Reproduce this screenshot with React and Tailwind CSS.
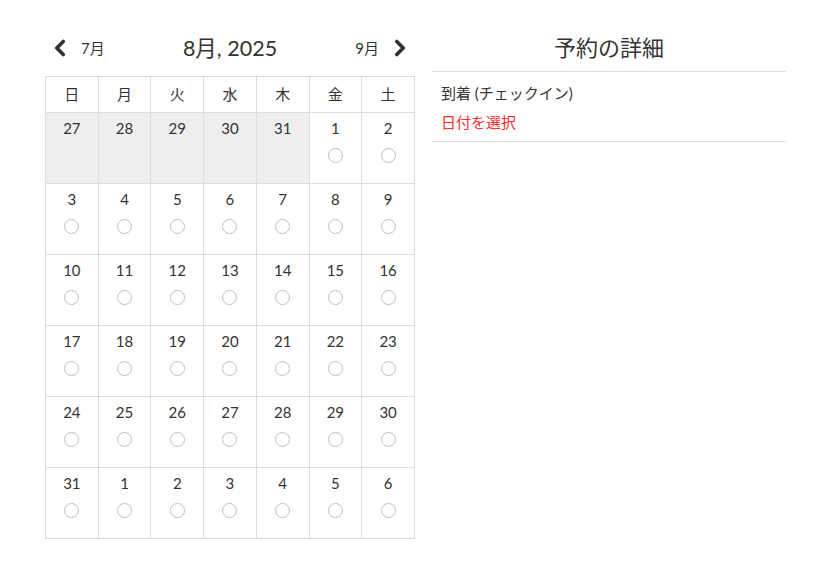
import { ChevronLeft, ChevronRight } from "lucide-react"

const weekdays = ["日", "月", "火", "水", "木", "金", "土"]

const weeks = [
  [27, 28, 29, 30, 31, 1, 2],
  [3, 4, 5, 6, 7, 8, 9],
  [10, 11, 12, 13, 14, 15, 16],
  [17, 18, 19, 20, 21, 22, 23],
  [24, 25, 26, 27, 28, 29, 30],
  [31, 1, 2, 3, 4, 5, 6],
]

function DayCell({ day, past }) {
  return (
    <td
      className={`border border-[#dcdcdc] h-[71px] align-top text-center pt-[5px] ${
        past ? "bg-[#eeeeee]" : "bg-white"
      }`}
    >
      <div className="text-[15px] leading-[20px] text-[#333]">{day}</div>
      {!past && (
        <div className="mx-auto mt-[10px] w-[15px] h-[15px] rounded-full border border-[#bdbdbd]" />
      )}
    </td>
  )
}

export default function App() {
  return (
    <div
      className="flex gap-[17px] pl-[45px] pt-[30px] text-[#333]"
      style={{ fontFamily: "Lato, 'Noto Sans CJK JP', sans-serif" }}
    >
      <div className="w-[370px]">
        <div className="flex items-center h-[36px] mb-[10px]">
          <button className="flex items-center pl-[2px] text-[15px]">
            <ChevronLeft className="w-[26px] h-[26px]" strokeWidth={3.4} />
            <span className="ml-[8px]">7月</span>
          </button>
          <div className="flex-1 text-center text-[21.5px]">8月, 2025</div>
          <button className="flex items-center pr-[2px] text-[15px]">
            <span className="mr-[8px]">9月</span>
            <ChevronRight className="w-[26px] h-[26px]" strokeWidth={3.4} />
          </button>
        </div>
        <table className="w-full border-collapse table-fixed">
          <thead>
            <tr>
              {weekdays.map((w) => (
                <th
                  key={w}
                  className="border border-[#dcdcdc] h-[36px] font-normal text-[15px] text-[#333]"
                >
                  {w}
                </th>
              ))}
            </tr>
          </thead>
          <tbody>
            {weeks.map((week, wi) => (
              <tr key={wi}>
                {week.map((d, di) => (
                  <DayCell key={di} day={d} past={wi === 0 && di < 5} />
                ))}
              </tr>
            ))}
          </tbody>
        </table>
      </div>
      <div className="w-[354px]">
        <h2 className="text-center text-[22px] h-[36px] leading-[36px]">予約の詳細</h2>
        <div className="border-t border-[#dcdcdc] mt-[5px] px-[9px] pt-[10px] pb-[8px]">
          <div className="text-[15px] leading-[22px]">到着 (チェックイン)</div>
          <div className="text-[15px] leading-[22px] mt-[7px] text-[#ff2a2a]">日付を選択</div>
        </div>
        <div className="border-t border-[#dcdcdc]" />
      </div>
    </div>
  )
}
